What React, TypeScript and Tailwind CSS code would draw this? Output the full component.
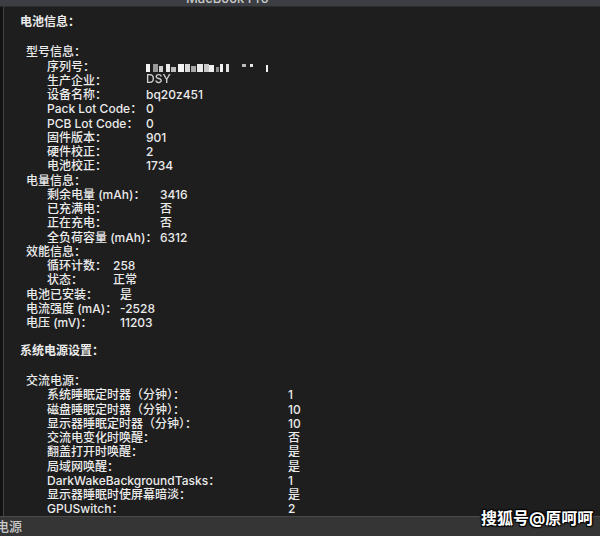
import React from "react";

type Row = { label: string; value?: React.ReactNode };

const font = { fontFamily: '"Inter", "Noto Sans CJK SC", sans-serif' };

const SerialBlur = () => (
  <svg width="130" height="10" viewBox="0 0 130 10" className="mt-[2px]">
    <rect x="0" y="1" width="4" height="8" fill="#f2f2f2" />
    <rect x="7" y="1" width="5" height="8" fill="#9a9a9a" />
    <rect x="13" y="3" width="4" height="6" fill="#d0d0d0" />
    <rect x="20" y="1" width="4" height="8" fill="#e8e8e8" />
    <rect x="25" y="4" width="5" height="5" fill="#bdbdbd" />
    <rect x="32" y="1" width="6" height="8" fill="#f4f4f4" />
    <rect x="39" y="1" width="5" height="8" fill="#d8d8d8" />
    <rect x="45" y="3" width="5" height="6" fill="#a8a8a8" />
    <rect x="51" y="1" width="6" height="8" fill="#ececec" />
    <rect x="58" y="1" width="5" height="8" fill="#c8c8c8" />
    <rect x="63" y="2" width="5" height="7" fill="#f0f0f0" />
    <rect x="70" y="4" width="3" height="5" fill="#8a8a8a" />
    <rect x="74" y="1" width="3" height="8" fill="#f2f2f2" />
    <rect x="80" y="1" width="3" height="8" fill="#e0e0e0" />
    <rect x="96" y="1" width="4" height="3" fill="#bbbbbb" />
    <rect x="104" y="1" width="3" height="3" fill="#e6e6e6" />
    <rect x="120" y="2" width="2" height="7" fill="#f0f0f0" />
  </svg>
);

const Group = ({ rows, labelW, indent }: { rows: Row[]; labelW: string; indent: string }) => (
  <div className={indent}>
    {rows.map((r, i) => (
      <div key={i} className="flex h-[14.26px] items-center">
        <div className={`${labelW} shrink-0 whitespace-nowrap`}>{r.label}</div>
        <div className="whitespace-nowrap">{r.value}</div>
      </div>
    ))}
  </div>
);

const Heading = ({ text, className }: { text: string; className?: string }) => (
  <div className={`h-[14.26px] flex items-center whitespace-nowrap ${className ?? ""}`}>{text}</div>
);

export default function App() {
  return (
    <div className="relative w-[600px] h-[536px] overflow-hidden bg-[#1e1e1e] text-[#ebebeb] text-[12px] font-medium" style={font}>
      {/* title bar */}
      <div className="h-[7px] bg-[#3b3e42] overflow-hidden border-b border-[#2a2c2e]">
        <div className="pl-[186px] -mt-[9px] text-[13px] text-[#c9c9c9] leading-[14px]">MacBook Pro</div>
      </div>

      <div className="flex h-[509px]">
        <div className="w-[3px] bg-[#121212]" />
        <div className="w-[1px] bg-[#444]" />
        <div className="flex-1 pt-[8px]">
          <Heading text="电池信息：" className="pl-[16px] font-bold" />

          <Heading text="型号信息：" className="pl-[22px] mt-[16px]" />
          <Group
            indent="pl-[43px]"
            labelW="w-[99px]"
            rows={[
              { label: "序列号：", value: <SerialBlur /> },
              { label: "生产企业：", value: <span className="blur-[0.6px] text-[#cfcfcf] relative -top-[2px]">DSY</span> },
              { label: "设备名称：", value: "bq20z451" },
              { label: "Pack Lot Code：", value: "0" },
              { label: "PCB Lot Code：", value: "0" },
              { label: "固件版本：", value: "901" },
              { label: "硬件校正：", value: "2" },
              { label: "电池校正：", value: "1734" },
            ]}
          />
          <Heading text="电量信息：" className="pl-[22px]" />
          <Group
            indent="pl-[43px]"
            labelW="w-[113px]"
            rows={[
              { label: "剩余电量 (mAh)：", value: "3416" },
              { label: "已充满电：", value: "否" },
              { label: "正在充电：", value: "否" },
              { label: "全负荷容量 (mAh)：", value: "6312" },
            ]}
          />
          <Heading text="效能信息：" className="pl-[22px]" />
          <Group
            indent="pl-[43px]"
            labelW="w-[66px]"
            rows={[
              { label: "循环计数：", value: "258" },
              { label: "状态：", value: "正常" },
            ]}
          />
          <Group
            indent="pl-[22px]"
            labelW="w-[94px]"
            rows={[
              { label: "电池已安装：", value: "是" },
              { label: "电流强度 (mA)：", value: "-2528" },
              { label: "电压 (mV)：", value: "11203" },
            ]}
          />

          <Heading text="系统电源设置：" className="pl-[16px] font-bold mt-[14px]" />

          <Heading text="交流电源：" className="pl-[22px] mt-[15.5px]" />
          <Group
            indent="pl-[43px]"
            labelW="w-[241px]"
            rows={[
              { label: "系统睡眠定时器（分钟）：", value: "1" },
              { label: "磁盘睡眠定时器（分钟）：", value: "10" },
              { label: "显示器睡眠定时器（分钟）：", value: "10" },
              { label: "交流电变化时唤醒：", value: "否" },
              { label: "翻盖打开时唤醒：", value: "是" },
              { label: "局域网唤醒：", value: "是" },
              { label: "DarkWakeBackgroundTasks：", value: "1" },
              { label: "显示器睡眠时使屏幕暗淡：", value: "是" },
              { label: "GPUSwitch：", value: "2" },
            ]}
          />
        </div>
      </div>

      {/* bottom bar */}
      <div className="h-[20px] bg-[#353535] border-t border-[#4a4a4a] flex items-center">
        <span className="-ml-[4px] text-[13px] text-[#c8c8c8]">电源</span>
      </div>

      {/* watermark */}
      <div
        className="absolute left-[481px] top-[508px] text-[16px] font-bold text-white leading-[20px] whitespace-nowrap"
        style={{ textShadow: "1px 1px 1px #000, -1px -1px 1px #000, 1px -1px 1px #000, -1px 1px 1px #000" }}
      >
        搜狐号@原呵呵
      </div>
    </div>
  );
}
